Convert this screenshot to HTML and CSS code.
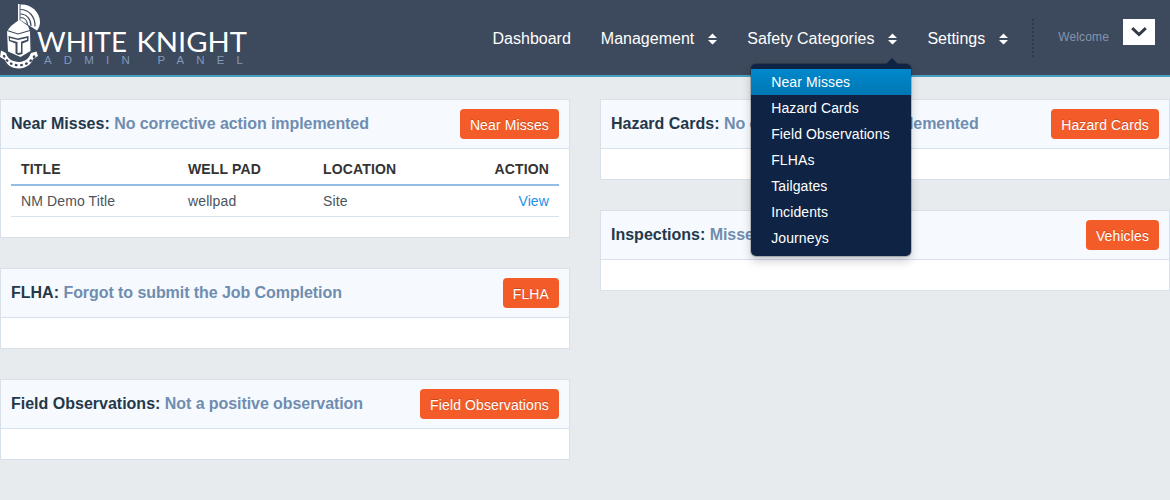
FILE: index.html
```html
<!DOCTYPE html>
<html lang="en">
<head>
<meta charset="utf-8">
<title>White Knight Admin Panel</title>
<link rel="stylesheet" href="styles.css">
</head>
<body>
<header class="topbar">
  <svg class="logo" width="250" height="75" viewBox="0 0 250 75">
    <!-- plume -->
    <path fill="#fff" d="M18 4h1.600v22H18z"/>
    <path fill="#fff" d="M20.500 4.500C31 4 40 12 40 22c0 3-1 6-3 8.500L20.500 20z"/>
    <path fill="none" stroke="#3d495c" stroke-width="1.200" d="M20.500 9.500c8 0 15 7 14.500 17M20.500 14c6 0 10.500 5 10.500 12M20.500 17.500c4 0 7 3 7 8"/>
    <!-- helmet -->
    <path fill="#fff" d="M17.500 21 20 20l8 6 2 5 .500 20-10 6L8 51.500 7 31l4-5z"/>
    <path fill="none" stroke="#3d495c" stroke-width="1.100" d="M7 30.500l11 3.500 12-3.500"/>
    <path fill="#3d495c" d="M8.500 36l9 2.500L28.500 36v5l-6 2.500V54l-4 1-3-1.500V43.500L9 41z"/>
    <path fill="#fff" d="M10 38l8 2 9-2v1.800l-6 2V52.500l-3.500.5V42L10 40z"/>
    <!-- collar -->
    <path fill="#fff" d="M1 50.500l5 2.500c2 7 7 8.500 13 9 7-.500 10-4 12-9l5.500-1.500L38 56l-5 3c-2 6-7 9-14 9.500C11 68 7 65 5 60l-5-3z"/>
    <path fill="none" stroke="#3d495c" stroke-width="2.400" stroke-linecap="round" stroke-dasharray=".6 4.600" d="M4 56c3 6 8 9.300 15 9.300S32 61 35 55"/>
    <text class="logo-name" x="37" y="52" textLength="90" lengthAdjust="spacingAndGlyphs">WHITE</text>
    <text class="logo-name" x="136.500" y="52" textLength="110.500" lengthAdjust="spacingAndGlyphs">KNIGHT</text>
    <text class="logo-sub" x="44" y="64" textLength="199">ADMIN PANEL</text>
  </svg>
  <nav class="nav">
    <a class="nav-link">Dashboard</a>
    <a class="nav-link">Management<svg class="sort" viewBox="0 0 10 12"><path d="M0 5 5 0l5 5zM0 7h10l-5 5z"/></svg></a>
    <div class="dropdown">
      <a class="nav-link">Safety Categories<svg class="sort" viewBox="0 0 10 12"><path d="M0 5 5 0l5 5zM0 7h10l-5 5z"/></svg></a>
      <div class="menu">
        <a class="menu-item active">Near Misses</a>
        <a class="menu-item">Hazard Cards</a>
        <a class="menu-item">Field Observations</a>
        <a class="menu-item">FLHAs</a>
        <a class="menu-item">Tailgates</a>
        <a class="menu-item">Incidents</a>
        <a class="menu-item">Journeys</a>
      </div>
    </div>
    <a class="nav-link">Settings<svg class="sort" viewBox="0 0 10 12"><path d="M0 5 5 0l5 5zM0 7h10l-5 5z"/></svg></a>
  </nav>
  <div class="user">
    <span class="welcome">Welcome</span>
    <button class="toggle"><svg width="16" height="10" viewBox="0 0 16 10"><path d="M1.200 1.200 8 7.500l6.800-6.300" fill="none" stroke="#343a45" stroke-width="3"/></svg></button>
  </div>
</header>
<main class="columns">
  <div class="column">
    <section class="panel">
      <div class="panel-head"><h2 class="title">Near Misses: <span class="note">No corrective action implemented</span></h2><a class="btn">Near Misses</a></div>
      <div class="panel-body with-table">
        <table class="table">
          <thead><tr><th class="c-title">TITLE</th><th class="c-pad">WELL PAD</th><th>LOCATION</th><th class="end">ACTION</th></tr></thead>
          <tbody><tr><td>NM Demo Title</td><td>wellpad</td><td>Site</td><td class="end"><a class="link">View</a></td></tr></tbody>
        </table>
      </div>
    </section>
    <section class="panel">
      <div class="panel-head"><h2 class="title">FLHA: <span class="note">Forgot to submit the Job Completion</span></h2><a class="btn">FLHA</a></div>
      <div class="panel-body"></div>
    </section>
    <section class="panel">
      <div class="panel-head"><h2 class="title">Field Observations: <span class="note">Not a positive observation</span></h2><a class="btn">Field Observations</a></div>
      <div class="panel-body"></div>
    </section>
  </div>
  <div class="column">
    <section class="panel">
      <div class="panel-head"><h2 class="title">Hazard Cards: <span class="note">No corrective action implemented</span></h2><a class="btn">Hazard Cards</a></div>
      <div class="panel-body"></div>
    </section>
    <section class="panel">
      <div class="panel-head"><h2 class="title">Inspections: <span class="note">Missed inspections</span></h2><a class="btn">Vehicles</a></div>
      <div class="panel-body"></div>
    </section>
  </div>
</main>
</body>
</html>
```
FILE: styles.css
```css
* { box-sizing: border-box; }
body {
  margin: 0;
  height: 500px;
  overflow: hidden;
  background: #e7ebee;
  font: 14px/20px "Liberation Sans", Arial, sans-serif;
  color: #4c535b;
}
.topbar {
  display: flex;
  height: 77px;
  background: #3d495c;
  border-bottom: 2px solid #489fc2;
}
.logo { flex: none; }
.logo-name { font: 400 27px Lato, sans-serif; fill: #fff; }
.logo-sub { font: 11.5px "Liberation Sans", Arial, sans-serif; fill: #8299bc; }
.nav {
  display: flex;
  gap: 30px;
  margin-left: auto;
  padding-top: 29px;
}
.nav-link {
  display: flex;
  align-items: center;
  height: 20px;
  font-size: 16px;
  color: #fff;
  white-space: nowrap;
}
.sort { width: 9px; height: 12px; margin-left: 14px; fill: #fff; }
.dropdown { position: relative; }
.menu {
  position: absolute;
  top: 35px;
  left: 4px;
  z-index: 2;
  width: 160px;
  padding: 5px 0;
  background: #0f2444;
  border-radius: 5px;
  box-shadow: 0 0 0 1px rgba(0, 0, 0, .2), 0 5px 10px rgba(0, 0, 0, .2);
}
.menu::before {
  content: "";
  position: absolute;
  top: -6px;
  right: 13px;
  border: 6px solid transparent;
  border-top: 0;
  border-bottom-color: #0f2444;
}
.menu-item {
  display: block;
  height: 26px;
  padding: 3px 20px;
  color: #fff;
  letter-spacing: .1px;
  white-space: nowrap;
}
.menu-item.active { background: linear-gradient(#0088cc, #0077b3); }
.user {
  display: flex;
  margin: 19px 15px 0 24px;
  height: 38px;
  padding-left: 24px;
  border-left: 2px dotted #2c3a4d;
}
.welcome {
  padding-top: 8px;
  margin-right: 14px;
  font-size: 12px;
  letter-spacing: .14px;
  color: #8295b0;
}
.toggle {
  display: flex;
  align-items: center;
  justify-content: center;
  width: 32px;
  height: 26px;
  padding: 0;
  border: 0;
  background: #fff;
}
.columns {
  display: grid;
  grid-template-columns: 570px 570px;
  gap: 30px;
  padding-top: 22px;
}
.column { display: flex; flex-direction: column; gap: 30px; }
.panel { border: 1px solid #d8e0ea; background: #fff; }
.panel-head {
  display: flex;
  justify-content: space-between;
  align-items: center;
  height: 49px;
  padding: 0 10px;
  background: #f6f9fe;
  border-bottom: 1px solid #d8e2ee;
}
.title {
  margin: 0;
  font-size: 16px;
  line-height: 20px;
  color: #24384a;
  white-space: nowrap;
}
.note { color: #6f8db0; letter-spacing: -.07px; }
.btn {
  height: 30px;
  padding: 6px 10px 4px;
  border-radius: 4px;
  background: #f35b28;
  color: #fff;
  letter-spacing: .12px;
  text-shadow: 0 -1px 0 rgba(0, 0, 0, .2);
  white-space: nowrap;
}
.panel-body { height: 30px; }
.with-table { height: 88px; padding: 0 10px; }
.table { width: 100%; border-collapse: separate; border-spacing: 0; table-layout: fixed; }
.c-title { width: 167px; }
.c-pad { width: 135px; }
.table th {
  height: 37px;
  padding: 4px 10px 0;
  border-bottom: 2px solid #95bce8;
  color: #333;
  letter-spacing: .15px;
  text-align: left;
}
.table td { height: 31px; padding: 0 10px; border-bottom: 1px solid #d8e2ee; letter-spacing: .12px; }
.table .end { text-align: right; }
.link { color: #2491e8; }
```
